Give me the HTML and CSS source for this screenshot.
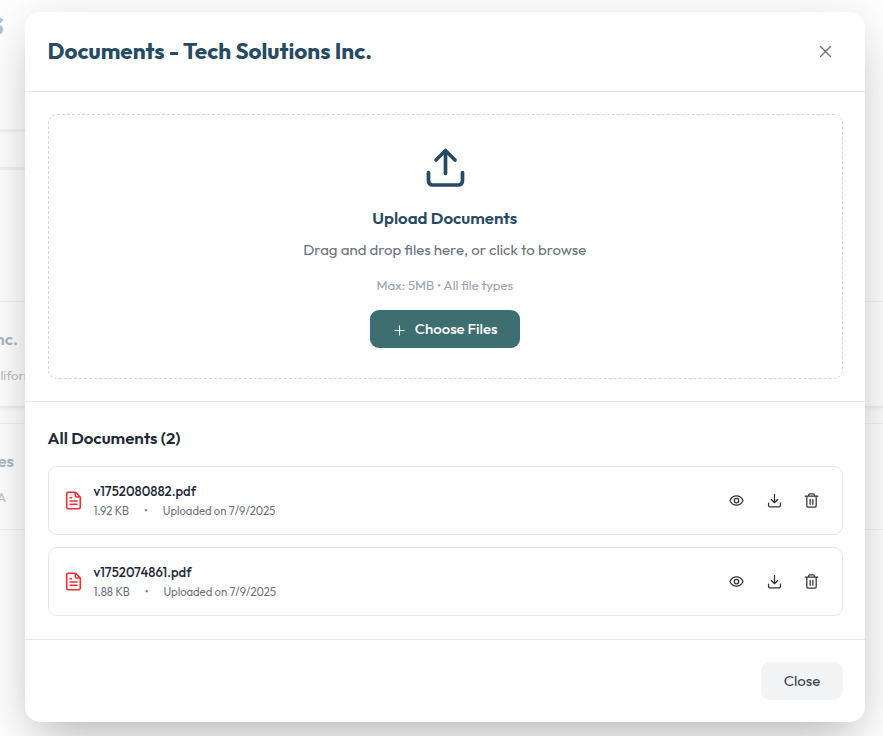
FILE: index.html
```html
<!DOCTYPE html>
<html lang="en">
<head>
<meta charset="utf-8">
<title>Documents</title>
<link rel="stylesheet" href="styles.css">
</head>
<body>
<svg width="0" height="0" class="defs">
  <symbol id="file" viewBox="0 0 17 19"><path d="M3 1.200h7.500l4.800 4.800v9.800a2 2 0 0 1-2 2H3.200a1.500 1.500 0 0 1-1.500-1.500V2.700A1.500 1.500 0 0 1 3.200 1.200zM10.300 1.200v3.300a1.500 1.500 0 0 0 1.500 1.500h3.500M5 6.700h1.500M5 10h7M5 13.300h7"/></symbol>
  <symbol id="eye" viewBox="0 0 24 24"><path d="M1.500 12C3.500 7.500 7.200 4.500 12 4.500S20.500 7.500 22.500 12C20.500 16.500 16.800 19.500 12 19.500S3.500 16.500 1.500 12z"/><circle cx="12" cy="12" r="3.600"/></symbol>
  <symbol id="download" viewBox="0 0 24 24"><path d="M12 2v13M7 10.500l5 5 5-5M2.500 16v4a2 2 0 0 0 2 2h15a2 2 0 0 0 2-2v-4"/></symbol>
  <symbol id="trash" viewBox="0 0 24 24"><path d="M2 5h20M4.500 5v15.500a2 2 0 0 0 2 2h11a2 2 0 0 0 2-2V5M7.500 5V3a1.500 1.500 0 0 1 1.500-1.500h6A1.500 1.500 0 0 1 16.500 3v2M9.800 10v8M14.200 10v8"/></symbol>
</svg>
<main class="page">
  <div class="page-title">s</div>
  <div class="filter"></div>
  <section class="client first">
    <div class="client-name">nc.</div>
    <div class="client-place wide">liforn</div>
  </section>
  <section class="client">
    <div class="client-name second">es</div>
    <div class="client-place">A</div>
  </section>
</main>
<div class="modal" role="dialog">
  <header class="head">
    <h1>Documents - Tech Solutions Inc.</h1>
    <svg class="x" viewBox="0 0 13 13"><path d="M1.500 1.500l10 10M11.500 1.500l-10 10"/></svg>
  </header>
  <section class="upload">
    <div class="drop">
      <svg class="up" viewBox="0 0 40 40"><path d="M20.500 26.500V4.500M11 13l9.500-9.500L30 13M3.500 25.500V34a4 4 0 0 0 4 4h26a4 4 0 0 0 4-4v-8.500"/></svg>
      <h2>Upload Documents</h2>
      <p class="hint">Drag and drop files here, or click to browse</p>
      <p class="limit">Max: 5MB • All file types</p>
      <button class="choose"><svg viewBox="0 0 12 12"><path d="M6 1v10M1 6h10"/></svg><span>Choose Files</span></button>
    </div>
  </section>
  <section class="docs">
    <h3>All Documents (2)</h3>
    <article class="doc">
      <svg class="file"><use href="#file"/></svg>
      <div class="info">
        <div class="name">v1752080882.pdf</div>
        <div class="meta"><span>1.92 KB</span><span>•</span><span>Uploaded on 7/9/2025</span></div>
      </div>
      <div class="actions"><svg><use href="#eye"/></svg><svg><use href="#download"/></svg><svg><use href="#trash"/></svg></div>
    </article>
    <article class="doc">
      <svg class="file"><use href="#file"/></svg>
      <div class="info">
        <div class="name">v1752074861.pdf</div>
        <div class="meta"><span>1.88 KB</span><span>•</span><span>Uploaded on 7/9/2025</span></div>
      </div>
      <div class="actions"><svg><use href="#eye"/></svg><svg><use href="#download"/></svg><svg><use href="#trash"/></svg></div>
    </article>
  </section>
  <footer class="foot"><button class="close">Close</button></footer>
</div>
</body>
</html>
```
FILE: styles.css
```css
* { box-sizing: border-box; margin: 0; padding: 0; }
body { width: 883px; height: 736px; overflow: hidden; background: #fdfdfd; font-family: Outfit, Lato, sans-serif; white-space: nowrap; position: relative; }
svg { fill: none; stroke: currentColor; stroke-linecap: round; stroke-linejoin: round; flex: none; display: block; overflow: visible; }
.defs { position: absolute; }
button { border: 0; font: inherit; }

.page { height: 736px; }
.page-title, .client-name, .client-place { display: flex; justify-content: flex-end; }
.page-title { width: 4px; height: 129px; padding-top: 0; font-size: 36px; line-height: 43px; font-weight: 700; color: #a9c3d6; }
.filter { width: 440px; height: 41px; border-top: 3px solid #f1f1f4; border-bottom: 3px solid #f1f1f4; }
.client { height: 107px; border-top: 1px solid #f1f1f2; border-bottom: 1px solid #f1f1f2; margin-top: 15px; }
.client.first { margin-top: 131px; border-bottom: 2px solid #efeff0; box-shadow: 0 2px 3px rgba(0,0,0,.03); }
.client-name { width: 18px; margin-top: 26px; font-size: 16.875px; line-height: 22px; font-weight: 600; color: #a9b9c2; }
.client-name.second { width: 14px; }
.client-place { width: 6px; margin-top: 16px; font-size: 13.125px; line-height: 18px; color: #bcc0c6; }
.client-place.wide { width: 31px; }

.modal { position: absolute; left: 25px; top: 12px; width: 840px; height: 710px; border-radius: 15px; background: #fff; box-shadow: 0 25px 50px -12px rgba(0,0,0,.25), 0 0 40px rgba(0,0,0,.06); }
.head { height: 80px; border-bottom: 1px solid #e5e7eb; padding: 0 33px 2px 22.500px; display: flex; align-items: center; justify-content: space-between; color: #264a63; }
h1 { font-size: 22.500px; line-height: 30px; font-weight: 700; }
.x { width: 13px; height: 13px; margin-top: 2px; color: #6b7280; stroke-width: 1.4; }

.upload { height: 310px; padding: 22px 22px 22px 22.500px; border-bottom: 1px solid #e5e7eb; }
.drop { height: 265px; border: 1px dashed #d1d5db; border-radius: 9px; display: flex; flex-direction: column; align-items: center; padding: 32px 1px 0 0; }
.up { width: 40px; height: 40px; color: #264a63; stroke-width: 3.700; }
h2 { margin-top: 19px; font-size: 16.875px; line-height: 24px; font-weight: 600; color: #264a63; }
.hint { margin-top: 9px; font-size: 15px; line-height: 22px; color: #6b7280; }
.limit { margin-top: 14px; font-size: 13.125px; line-height: 20px; color: #9ca3af; }
.choose { margin-top: 15px; width: 150px; height: 38px; border-radius: 9px; background: #3d6e70; color: #fff; display: flex; align-items: center; padding: 0 0 2px 24px; gap: 10px; font-size: 15px; font-weight: 500; }
.choose svg { width: 11px; height: 11px; margin-top: 4px; stroke-width: 1.2; }

.docs { height: 238px; padding: 24px 22px 0 22.500px; border-bottom: 1px solid #e5e7eb; }
h3 { font-size: 16.875px; line-height: 24px; font-weight: 600; color: #1f2937; margin-bottom: 16px; }
.doc { height: 69px; border: 1px solid #e5e7eb; border-radius: 9px; margin-bottom: 12px; display: flex; align-items: center; padding: 0 23px 0 16px; }
.file { width: 17px; height: 19px; color: #fb2c36; stroke-width: 1.600; }
.info { margin-left: 12px; flex: 1; }
.name { font-size: 13.125px; line-height: 20px; font-weight: 500; color: #1f2937; }
.meta { display: flex; gap: 15px; font-size: 11.250px; line-height: 18px; color: #6b7280; margin-top: 1px; }
.actions { display: flex; gap: 23px; color: #333; }
.actions svg { width: 15px; height: 15px; stroke-width: 2; }
.actions svg:last-child { margin-left: -1px; }

.foot { height: 82px; display: flex; justify-content: flex-end; align-items: center; padding-right: 22px; }
.close { width: 82px; height: 38px; border-radius: 9px; background: #f3f4f6; color: #364153; font-size: 15px; padding-bottom: 1px; }
```
